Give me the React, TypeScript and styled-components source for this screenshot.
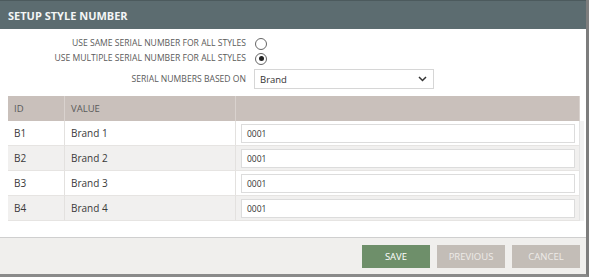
import styled, { createGlobalStyle } from "styled-components";

const GlobalStyle = createGlobalStyle`
	html, body {
		margin: 0;
		padding: 0;
		background: #ffffff;
	}
	body {
		font-family: "Open Sans", "Liberation Sans", sans-serif;
	}
`;

const Dialog = styled.div`
	width: 589px;
	height: 277px;
	box-sizing: border-box;
	display: flex;
	flex-direction: column;
	background: #ffffff;
	border-right: 3px solid #7d7d7d;
	border-bottom: 3px solid #8a8a8a;
	overflow: hidden;
`;

const Header = styled.div`
	height: 29px;
	flex-shrink: 0;
	background: #5c6c70;
	color: #f4f6f6;
	font-size: 11px;
	font-weight: 700;
	display: flex;
	align-items: center;
	padding-left: 8px;
	border-top: 1px solid #4c5a5d;
	box-sizing: border-box;
`;

const Options = styled.div`
	display: grid;
	grid-template-columns: 246px auto;
	column-gap: 8px;
	padding-top: 7px;
	align-items: center;
`;

const OptionLabel = styled.div`
	text-align: right;
	font-size: 8.6px;
	color: #5a5a5a;
	text-transform: uppercase;
	height: 15px;
	line-height: 15px;
`;

const RadioSlot = styled.div`
	height: 15px;
	display: flex;
	align-items: center;
`;

const Radio = styled.span<{ $checked?: boolean }>`
	width: 10px;
	height: 10px;
	border-radius: 50%;
	border: 1px solid #666;
	display: inline-flex;
	align-items: center;
	justify-content: center;
	margin-left: 1px;
	&::after {
		content: "";
		width: 5px;
		height: 5px;
		border-radius: 50%;
		background: ${(p) => (p.$checked ? "#222" : "transparent")};
	}
`;

const SelectBox = styled.div`
	width: 180px;
	height: 20px;
	box-sizing: border-box;
	border: 1px solid #d6d6d6;
	display: flex;
	align-items: center;
	justify-content: space-between;
	padding: 0 6px 0 5px;
	font-size: 9.5px;
	color: #333;
	margin-top: 3px;
`;

const OptionRowLabel = styled(OptionLabel)`
	margin-top: 3px;
	height: 20px;
	line-height: 20px;
`;

const TableArea = styled.div`
	margin: 7px 2px 0 8px;
	height: 125px;
	overflow: hidden;
	position: relative;
`;

const Table = styled.div`
	display: grid;
	grid-template-columns: 57px 171px 1fr;
	margin-right: 4px;
`;

const HeadCell = styled.div`
	background: #c9c0bb;
	height: 25px;
	display: flex;
	align-items: center;
	padding-left: 6px;
	font-size: 9.5px;
	color: #5a5a5a;
	border-right: 1px solid #d9d2ce;
	&:last-child {
		border-right: none;
	}
`;

const Cell = styled.div<{ $alt?: boolean }>`
	background: ${(p) => (p.$alt ? "#f1f0ef" : "#ffffff")};
	height: 25px;
	box-sizing: border-box;
	display: flex;
	align-items: center;
	padding-left: 6px;
	font-size: 10px;
	color: #3a3a3a;
	border-right: 1px solid #e3e1df;
	border-bottom: 1px solid #e6e4e2;
`;

const InputCell = styled(Cell)`
	padding: 0 5px 0 5px;
	border-right: none;
`;

const Input = styled.div`
	flex: 1;
	height: 19px;
	box-sizing: border-box;
	border: 1px solid #dcdcdc;
	background: #fff;
	display: flex;
	align-items: center;
	padding-left: 5px;
	font-size: 8.5px;
	color: #333;
`;

const Track = styled.div`
	position: absolute;
	right: 0;
	top: 25px;
	bottom: 0;
	width: 4px;
	background: #f2f2f2;
	border-left: 1px solid #e4e4e4;
`;

const Spacer = styled.div`
	flex: 1;
`;

const Footer = styled.div`
	height: 36px;
	flex-shrink: 0;
	background: #f0efed;
	border-top: 1px solid #cfcfcf;
	display: flex;
	justify-content: flex-end;
	align-items: center;
	gap: 7px;
	padding-right: 6px;
`;

const Button = styled.div<{ $primary?: boolean }>`
	width: 68px;
	height: 23px;
	display: flex;
	align-items: center;
	justify-content: center;
	font-size: 9.5px;
	color: ${(p) => (p.$primary ? "#ffffff" : "#eeebe8")};
	background: ${(p) => (p.$primary ? "#6e8f6a" : "#c3bdb7")};
`;

const rows = [
	{ id: "B1", value: "Brand 1", serial: "0001" },
	{ id: "B2", value: "Brand 2", serial: "0001" },
	{ id: "B3", value: "Brand 3", serial: "0001" },
	{ id: "B4", value: "Brand 4", serial: "0001" },
];

export default function App() {
	return (
		<>
			<GlobalStyle />
			<Dialog>
				<Header>SETUP STYLE NUMBER</Header>
				<Options>
					<OptionLabel>Use same serial number for all styles</OptionLabel>
					<RadioSlot>
						<Radio />
					</RadioSlot>
					<OptionLabel>Use multiple serial number for all styles</OptionLabel>
					<RadioSlot>
						<Radio $checked />
					</RadioSlot>
					<OptionRowLabel>Serial numbers based on</OptionRowLabel>
					<SelectBox>
						<span>Brand</span>
						<svg width="9" height="6" viewBox="0 0 9 6">
							<path d="M1 1 L4.5 4.5 L8 1" fill="none" stroke="#333" strokeWidth="1.5" />
						</svg>
					</SelectBox>
				</Options>
				<TableArea>
					<Table>
						<HeadCell>ID</HeadCell>
						<HeadCell>VALUE</HeadCell>
						<HeadCell />
						{rows.map((r, i) => [
							<Cell key={`id_${i}`} $alt={i % 2 === 1}>{r.id}</Cell>,
							<Cell key={`val_${i}`} $alt={i % 2 === 1}>{r.value}</Cell>,
							<InputCell key={`in_${i}`} $alt={i % 2 === 1}>
								<Input>{r.serial}</Input>
							</InputCell>,
						])}
					</Table>
					<Track />
				</TableArea>
				<Spacer />
				<Footer>
					<Button $primary>SAVE</Button>
					<Button>PREVIOUS</Button>
					<Button>CANCEL</Button>
				</Footer>
			</Dialog>
		</>
	);
}
